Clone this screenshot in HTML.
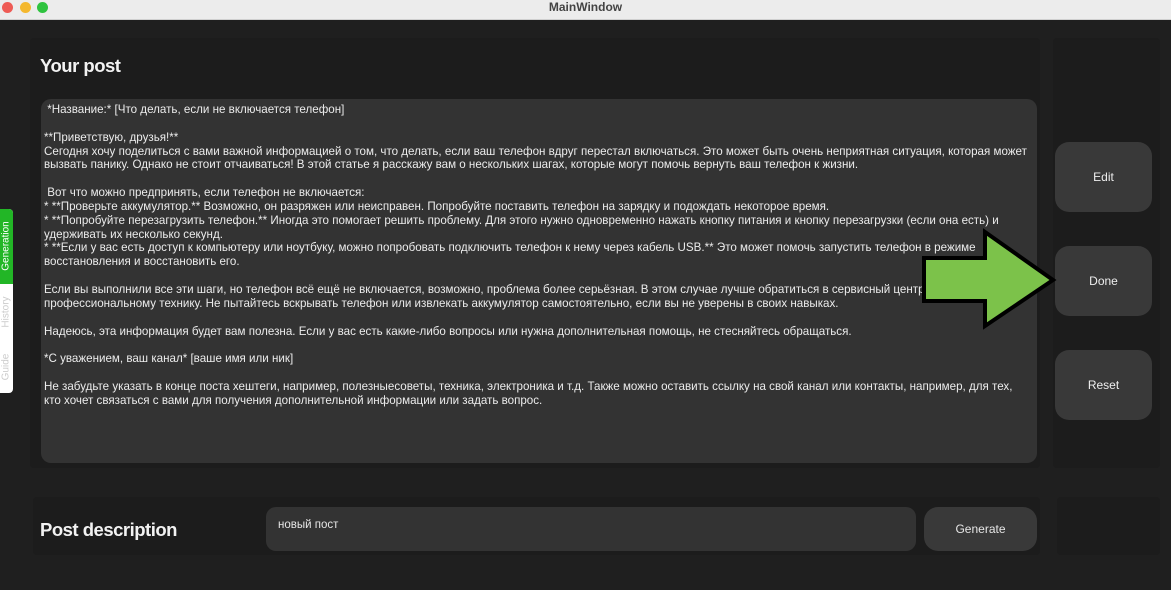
<!DOCTYPE html><html><head><meta charset="utf-8"><style>
body{margin:0;width:1171px;height:590px;background:#1f1f1f;position:relative;overflow:hidden;font-family:"Liberation Sans",sans-serif;color:#e6e6e6}
.tb{position:absolute;left:0;top:0;width:1171px;height:19px;background:#ececec;border-bottom:1px solid #cfcfcf}
.tb .t{position:absolute;left:0;right:0;top:0;text-align:center;font-size:12px;font-weight:bold;color:#444;line-height:14px}
.dot{position:absolute;top:2px;width:11px;height:11px;border-radius:50%}
.p{position:absolute;background:#1c1c1c;border-radius:4px}
.ta{position:absolute;left:41px;top:99px;width:996px;height:364px;background:#333;border-radius:10px}
.txt{position:absolute;left:44px;top:103px;width:992px;font-size:11.6px;line-height:13.85px;color:#ececec;white-space:pre-wrap}
.btn{position:absolute;left:1055px;width:97px;height:70px;background:#393939;border-radius:14px;font-size:12px;text-align:center;line-height:70px;color:#eee}
h1{position:absolute;margin:0;font-size:18.5px;font-weight:bold;color:#f2f2f2;letter-spacing:-.5px}
</style></head><body>
<div class="tb"><div class="dot" style="left:2px;background:#ee5b55"></div><div class="dot" style="left:20px;background:#f4b82e"></div><div class="dot" style="left:37px;background:#2fc33f"></div><div class="t">MainWindow</div></div>
<div class="p" style="left:30px;top:38px;width:1010px;height:430px"></div>
<div class="p" style="left:1053px;top:38px;width:107px;height:430px"></div>
<div class="p" style="left:33px;top:497px;width:1007px;height:58px"></div>
<div class="p" style="left:1057px;top:497px;width:103px;height:58px"></div>
<h1 style="left:40px;top:55px">Your post</h1>
<div class="ta"></div>
<div class="txt"> *Название:* [Что делать, если не включается телефон]

**Приветствую, друзья!**
Сегодня хочу поделиться с вами важной информацией о том, что делать, если ваш телефон вдруг перестал включаться. Это может быть очень неприятная ситуация, которая может вызвать панику. Однако не стоит отчаиваться! В этой статье я расскажу вам о нескольких шагах, которые могут помочь вернуть ваш телефон к жизни.

 Вот что можно предпринять, если телефон не включается:
* **Проверьте аккумулятор.** Возможно, он разряжен или неисправен. Попробуйте поставить телефон на зарядку и подождать некоторое время.
* **Попробуйте перезагрузить телефон.** Иногда это помогает решить проблему. Для этого нужно одновременно нажать кнопку питания и кнопку перезагрузки (если она есть) и удерживать их несколько секунд.
* **Если у вас есть доступ к компьютеру или ноутбуку, можно попробовать подключить телефон к нему через кабель USB.** Это может помочь запустить телефон в режиме восстановления и восстановить его.

Если вы выполнили все эти шаги, но телефон всё ещё не включается, возможно, проблема более серьёзная. В этом случае лучше обратиться в сервисный центр к
профессиональному технику. Не пытайтесь вскрывать телефон или извлекать аккумулятор самостоятельно, если вы не уверены в своих навыках.

Надеюсь, эта информация будет вам полезна. Если у вас есть какие-либо вопросы или нужна дополнительная помощь, не стесняйтесь обращаться.

*С уважением, ваш канал* [ваше имя или ник]

Не забудьте указать в конце поста хештеги, например, полезныесоветы, техника, электроника и т.д. Также можно оставить ссылку на свой канал или контакты, например, для тех, 
кто хочет связаться с вами для получения дополнительной информации или задать вопрос.</div>
<div class="btn" style="top:142px">Edit</div>
<div class="btn" style="top:246px">Done</div>
<div class="btn" style="top:350px">Reset</div>
<svg style="position:absolute;left:0;top:0" width="1171" height="590"><polygon points="924,258 985,258 985,232 1053,280 985,326 985,301 924,301" fill="#7cc24a" stroke="#000" stroke-width="4" stroke-linejoin="miter"/></svg>
<div style="position:absolute;left:0;top:209px;width:13px;height:184px;background:#fff;border-radius:0 4px 4px 0"></div>
<div style="position:absolute;left:0;top:209px;width:13px;height:75px;background:#22b626;border-radius:0 4px 0 0"></div>
<div style="position:absolute;left:0;top:209px;width:13px;height:184px;font-size:10px;color:#fff">
<div style="position:absolute;left:6px;top:37px;transform:translate(-50%,-50%) rotate(-90deg);white-space:nowrap">Generation</div>
<div style="position:absolute;left:6px;top:103px;transform:translate(-50%,-50%) rotate(-90deg);color:#ccc">History</div>
<div style="position:absolute;left:6px;top:158px;transform:translate(-50%,-50%) rotate(-90deg);color:#ccc">Guide</div></div>
<h1 style="left:40px;top:519px">Post description</h1>
<div style="position:absolute;left:266px;top:507px;width:650px;height:44px;background:#333;border-radius:10px"></div>
<div style="position:absolute;left:278px;top:519px;font-size:11.5px">новый пост</div>
<div style="position:absolute;left:924px;top:507px;width:113px;height:44px;background:#393939;border-radius:14px;font-size:12px;line-height:44px;text-align:center">Generate</div>
</body></html>
